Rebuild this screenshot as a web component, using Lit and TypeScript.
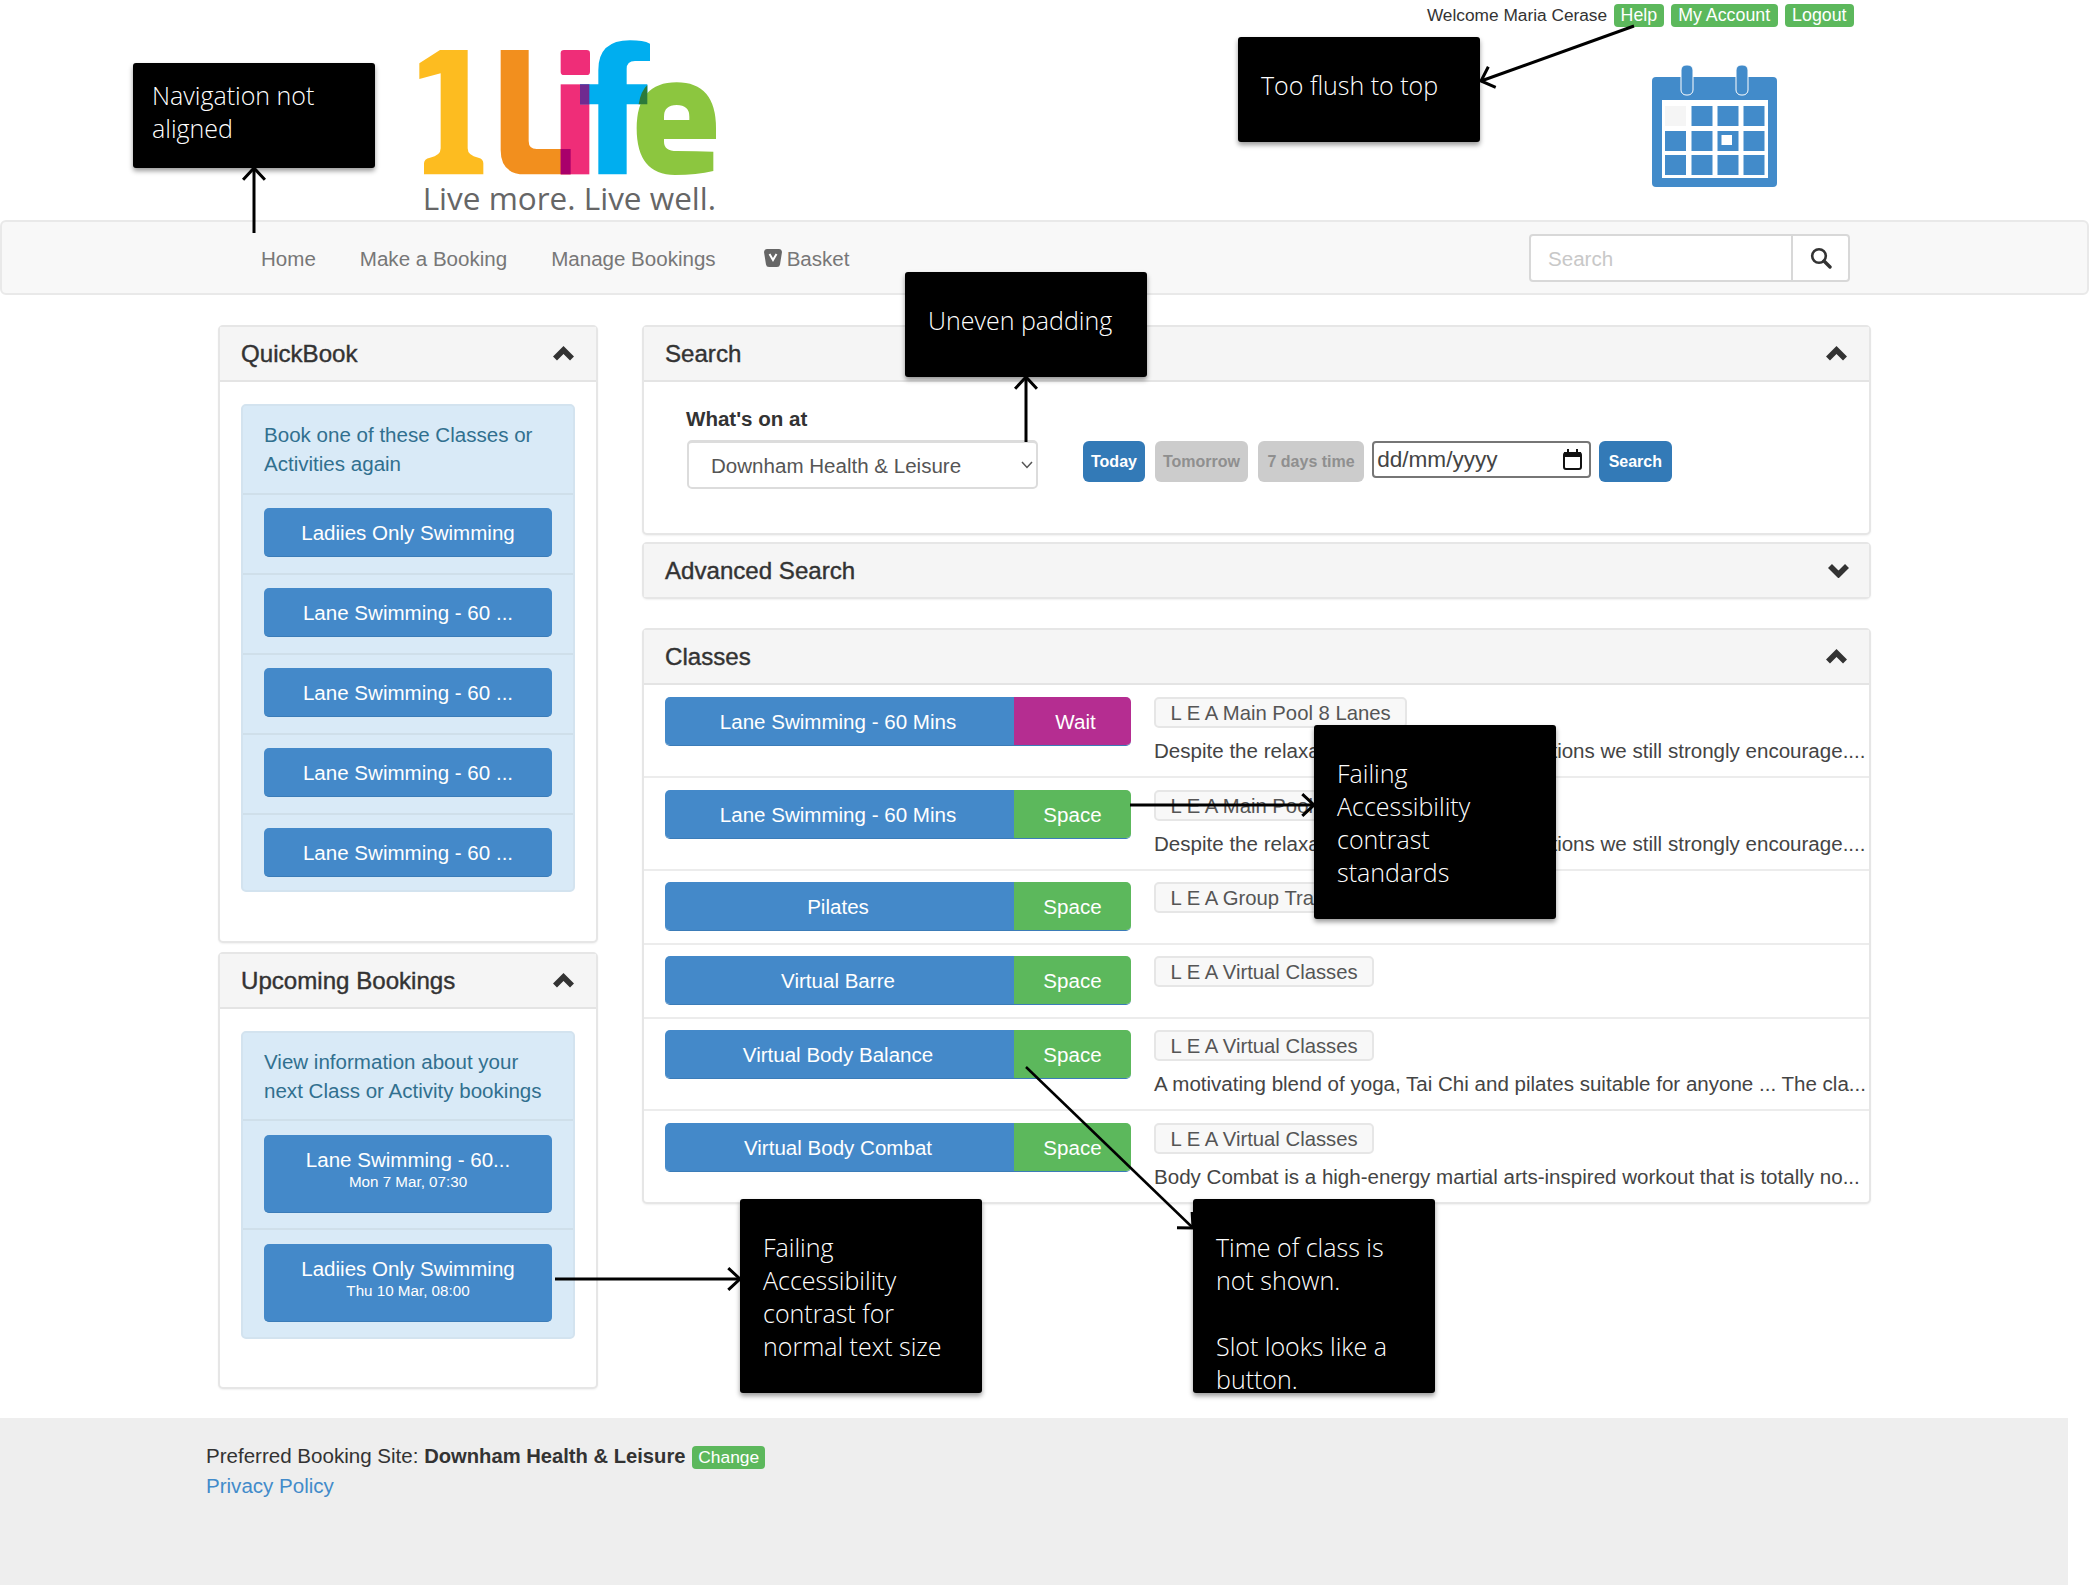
import { LitElement, html, css, svg } from "lit";
import { customElement } from "lit/decorators.js";

const DESC_COVID = "Despite the relaxation of all Covid-19 restrictions we still strongly encourage....";

const CLASSES = [
  { name: "Lane Swimming - 60 Mins", slot: "Wait", tag: "L E A Main Pool 8 Lanes", desc: DESC_COVID },
  { name: "Lane Swimming - 60 Mins", slot: "Space", tag: "L E A Main Pool 8 Lanes", desc: DESC_COVID },
  { name: "Pilates", slot: "Space", tag: "L E A Group Training", desc: "" },
  { name: "Virtual Barre", slot: "Space", tag: "L E A Virtual Classes", desc: "" },
  {
    name: "Virtual Body Balance",
    slot: "Space",
    tag: "L E A Virtual Classes",
    desc: "A motivating blend of yoga, Tai Chi and pilates suitable for anyone ... The cla...",
  },
  {
    name: "Virtual Body Combat",
    slot: "Space",
    tag: "L E A Virtual Classes",
    desc: "Body Combat is a high-energy martial arts-inspired workout that is totally no...",
  },
];

const QUICK = [
  "Ladiies Only Swimming",
  "Lane Swimming - 60 ...",
  "Lane Swimming - 60 ...",
  "Lane Swimming - 60 ...",
  "Lane Swimming - 60 ...",
];

const UPCOMING = [
  { name: "Lane Swimming - 60...", when: "Mon 7 Mar, 07:30" },
  { name: "Ladiies Only Swimming", when: "Thu 10 Mar, 08:00" },
];

// annotation arrows: line from (x1,y1) to the tip (x2,y2), open head
const ARROWS = [
  { x1: 254, y1: 233, x2: 254, y2: 168, w: 3 },
  { x1: 1634, y1: 26, x2: 1481, y2: 81, w: 3 },
  { x1: 1026, y1: 442, x2: 1026, y2: 377, w: 3 },
  { x1: 1130, y1: 805, x2: 1314, y2: 805, w: 3 },
  { x1: 555, y1: 1279, x2: 740, y2: 1279, w: 3 },
  { x1: 1026, y1: 1067, x2: 1193, y2: 1228, w: 2.5 },
];

function arrowHead(a: { x1: number; y1: number; x2: number; y2: number }) {
  const ang = Math.atan2(a.y1 - a.y2, a.x1 - a.x2);
  const len = 16;
  const spread = 0.75;
  const p = (d: number) => `${a.x2 + Math.cos(ang + d) * len},${a.y2 + Math.sin(ang + d) * len}`;
  return `M${p(spread)} L${a.x2},${a.y2} L${p(-spread)}`;
}

function chevron(up: boolean) {
  const d = up ? "M2 12.5 L10.5 4 L19 12.5" : "M2 3 L10.5 11.5 L19 3";
  return html`<svg class="chev ${up ? "" : "down"}" width="21" height="15" viewBox="0 0 21 15">
    <path d=${d} fill="none" stroke="#333" stroke-width="5.6" />
  </svg>`;
}

@customElement("app-root")
export class AppRoot extends LitElement {
  static styles = css`
    :host {
      display: block;
      position: relative;
      width: 2089px;
      font-family: "Liberation Sans", Arial, sans-serif;
      font-size: 20.55px;
      line-height: 29px;
      color: #333;
      background: #fff;
    }
    * {
      box-sizing: border-box;
    }

    /* header */
    .header {
      height: 220px;
      display: flex;
      justify-content: space-between;
    }
    .logo {
      margin: 35px 0 0 410px;
      display: block;
    }
    .header-right {
      display: flex;
      flex-direction: column;
      align-items: flex-end;
      padding: 4px 235px 0 0;
    }
    .toplinks {
      display: flex;
      align-items: center;
      font-size: 17.3px;
      line-height: 23px;
      gap: 7px;
    }
    .badge {
      background: #5cb85c;
      color: #fff;
      border-radius: 4px;
      padding: 0 7.5px;
      font-size: 17.8px;
      height: 23px;
      line-height: 23px;
    }
    .badge.help {
      padding: 0 6.5px;
    }
    .calendar {
      display: block;
      margin: 38px 77px 0 0;
    }

    /* navbar */
    .nav {
      height: 75px;
      border: 2px solid #e9e9e9;
      border-radius: 6px;
      background: #f8f8f8;
      display: flex;
      align-items: center;
      padding: 1px 237px 0 259px;
      gap: 44px;
      color: #777;
    }
    .nav .basket {
      display: flex;
      align-items: center;
      gap: 5px;
      margin-left: 4px;
    }
    .navsearch {
      margin-left: auto;
      display: flex;
      height: 48px;
      background: #fff;
      border: 2px solid #d8d8d8;
      border-radius: 4px;
    }
    .navsearch .field {
      width: 262px;
      padding-left: 17px;
      color: #c8c8c8;
      line-height: 45px;
      border-right: 2px solid #d8d8d8;
    }
    .navsearch .go {
      width: 55px;
      display: flex;
      align-items: center;
      justify-content: center;
    }

    /* page columns */
    .main {
      display: grid;
      grid-template-columns: 380px 1229px;
      column-gap: 44px;
      align-items: start;
      padding: 30px 0 0 218px;
    }
    .col {
      display: flex;
      flex-direction: column;
    }
    .col-left {
      gap: 9px;
    }
    .panel {
      background: #fff;
      border: 2px solid #e6e6e6;
      border-radius: 5px;
      box-shadow: 0 1px 2px rgba(0, 0, 0, 0.06);
    }
    .panel-head {
      height: 55px;
      background: #f5f5f5;
      border-bottom: 2px solid #e4e4e4;
      display: flex;
      align-items: center;
      justify-content: space-between;
      padding: 0 22px 0 21px;
      font-size: 24.1px;
      -webkit-text-stroke: 0.4px #333;
    }
    .panel-head.closed {
      height: 53px;
      border-bottom: none;
    }
    .panel-head .chev.down {
      margin-right: -2px;
    }

    /* left lists */
    .side-body {
      padding: 22px 21px 49px 21px;
    }
    .side-body.upcoming {
      padding-bottom: 48px;
    }
    .list {
      background: #d9eaf7;
      border: 2px solid #d3e3ef;
      border-radius: 5px;
    }
    .list-item {
      padding: 13px 21px 16px;
      border-top: 2px solid #cfdfea;
    }
    .list-item:last-child {
      padding-bottom: 13px;
    }
    .list-item:first-child {
      border-top: none;
      padding: 14px 21px 14px;
      color: #31708f;
      line-height: 29.3px;
    }
    .upcoming .list-item:not(:first-child) {
      padding: 14px 21px 15px;
    }
    .book {
      background: #4489c9;
      color: #fff;
      border-radius: 5px;
      text-align: center;
      height: 49px;
      line-height: 49px;
      border-bottom: 1px solid #3b7cb8;
    }
    .book.tall {
      height: 78px;
      line-height: 29px;
      padding-top: 10px;
    }
    .book small {
      display: block;
      font-size: 15.2px;
      line-height: 22px;
      margin-top: -3px;
    }

    /* search panel */
    .col-right .gap-small {
      margin-top: 7px;
    }
    .col-right .gap-big {
      margin-top: 29px;
    }
    .search-body {
      padding: 22px 43px 44px;
    }
    .search-body label {
      display: block;
      font-weight: bold;
      margin: 0 0 7px -1px;
      line-height: 29px;
    }
    .search-row {
      display: flex;
      align-items: flex-start;
    }
    .select {
      width: 351px;
      height: 49px;
      border: 2px solid #dcdcdc;
      border-top-width: 3px;
      border-radius: 5px;
      display: flex;
      align-items: center;
      justify-content: space-between;
      padding: 0 3px 0 22px;
      color: #555;
      margin-right: 45px;
    }
    .pill {
      height: 41px;
      line-height: 41px;
      margin: 1px 10px 0 0;
      padding: 0 8px;
      border-radius: 6px;
      font-size: 16px;
      font-weight: bold;
      white-space: nowrap;
    }
    .pill.blue {
      background: #337ab7;
      color: #fff;
    }
    .pill.go {
      padding: 0 9.5px;
    }
    .pill.grey {
      background: #ccc;
      color: #8f8f8f;
    }
    .pill.seven {
      margin-right: 8px;
      padding: 0 9.5px;
    }
    .date {
      width: 219px;
      height: 37px;
      margin: 1px 8px 0 0;
      border: 2px solid #767676;
      border-radius: 4px;
      display: flex;
      align-items: center;
      justify-content: space-between;
      padding: 0 7px 1px 3px;
      font-size: 22.6px;
      color: #444;
    }

    /* classes */
    .row {
      display: flex;
      gap: 23px;
      padding: 11.5px 0 0 21px;
      border-top: 2px solid #ececec;
      height: 74px;
    }
    .row.has-desc {
      height: 92.5px;
    }
    .row.first {
      border-top: none;
      height: 91px;
      padding-top: 12px;
    }
    .slot {
      flex: none;
      width: 466px;
      height: 49px;
      display: flex;
      color: #fff;
      border-radius: 5px;
      overflow: hidden;
      text-align: center;
      line-height: 49px;
      border-bottom: 1px solid #3b7cb8;
    }
    .slot .name {
      width: 349px;
      background: #4489c9;
      padding-right: 3px;
    }
    .slot .state {
      width: 117px;
    }
    .state.space {
      background: #5cb85c;
    }
    .state.wait {
      background: #b52d91;
      padding-left: 6px;
    }
    .info {
      min-width: 0;
      flex: 1;
    }
    .tag {
      display: inline-block;
      height: 31px;
      line-height: 28px;
      padding: 0 14.5px;
      background: #f8f8f8;
      border: 2px solid #e6e6e6;
      border-radius: 5px;
      white-space: nowrap;
      color: #555;
      font-size: 20.3px;
    }
    .desc {
      margin-top: 8px;
      white-space: nowrap;
      color: #444;
    }

    /* footer */
    .footer {
      width: 2068px;
      height: 167px;
      margin-top: 29px;
      background: #eee;
      padding: 23px 0 0 206px;
    }
    .footer b {
      color: #333;
      font-size: 20.2px;
    }
    .footer .badge {
      font-size: 17.4px;
      padding: 0 6px;
      margin-left: 1px;
      display: inline-block;
    }
    .footer a {
      color: #428bca;
      display: block;
      text-decoration: none;
    }

    /* review annotations that lie over the page */
    .marks {
      position: absolute;
      left: 0;
      top: 0;
      pointer-events: none;
    }
    .note {
      position: absolute;
      width: 242px;
      background: #000;
      color: #fff;
      border-radius: 3px;
      box-shadow: 0 3px 5px rgba(0, 0, 0, 0.4);
      font-family: "Open Sans", sans-serif;
      font-weight: 300;
      font-size: 25px;
      line-height: 33px;
      padding: 32px 23px 0;
      height: 105px;
    }
    .note.nav-note {
      left: 133px;
      top: 63px;
      padding: 16px 19px 0;
    }
    .note.flush {
      left: 1238px;
      top: 37px;
    }
    .note.uneven {
      left: 905px;
      top: 272px;
    }
    .note.tall {
      height: 194px;
    }
    .note.contrast {
      left: 1314px;
      top: 725px;
    }
    .note.normal {
      left: 740px;
      top: 1199px;
    }
    .note.time {
      left: 1193px;
      top: 1199px;
    }
  `;

  private renderLogo() {
    return html`<svg class="logo" width="320" height="185" viewBox="0 0 960 555">
      <path fill="#fdbc20" d="M28 85 L90 45 H173 V340 Q173 362 205 368 Q220 372 220 385 V418 H42 V385 Q42 372 60 368 Q92 362 92 340 V115 L28 132 Z" />
      <path fill="#f28f1e" d="M272 45 H356 V318 Q356 342 380 342 H482 V418 H345 Q272 418 272 345 Z" />
      <rect fill="#ef2d78" x="452" y="45" width="88" height="75" rx="10" />
      <rect fill="#ef2d78" x="452" y="148" width="86" height="270" />
      <rect fill="#a9006b" x="452" y="342" width="30" height="76" />
      <path fill="#00aeef" d="M510 148 H565 V105 Q565 16 660 16 Q700 16 720 26 V78 H675 Q650 78 650 102 V148 H712 V208 H650 V418 H565 V208 H510 Z" />
      <rect fill="#6f2a90" x="510" y="148" width="28" height="60" />
      <path fill="#8cc63f" fill-rule="evenodd" d="M680 280 Q680 142 800 142 Q918 142 918 280 V312 H762 V320 Q762 348 800 348 Q860 348 910 350 V408 Q860 420 795 420 Q680 420 680 280 Z M762 255 H838 V245 Q838 210 800 210 Q762 210 762 245 Z" />
      <path fill="#2c7a3a" d="M686 208 H712 V150 Q692 168 686 208 Z" />
      <text x="38" y="525" font-family="Open Sans, sans-serif" font-size="92" fill="#666" textLength="880" lengthAdjust="spacingAndGlyphs">Live more. Live well.</text>
    </svg>`;
  }

  private renderCalendar() {
    const cols = [13, 39.5, 65.5, 91.5];
    const rows = [41, 66, 90];
    return html`<svg class="calendar" width="125" height="122" viewBox="0 0 125 122">
      <rect x="0" y="12" width="125" height="110" rx="4" fill="#428bca" />
      <rect x="29" y="0" width="12" height="30" rx="5" fill="#428bca" stroke="#fff" stroke-width="1" />
      <rect x="84" y="0" width="12" height="30" rx="5" fill="#428bca" stroke="#fff" stroke-width="1" />
      <rect x="10" y="35" width="106" height="78" fill="#fff" />
      ${rows.map((y, r) =>
        cols.map(
          (x, c) =>
            svg`<rect x=${x} y=${y} width="21" height="20" fill=${r === 0 && c === 0 ? "#f5f5f5" : "#428bca"} />`,
        ),
      )}
      <rect x="69.5" y="70" width="10.5" height="10" fill="#fff" />
    </svg>`;
  }

  private renderHeader() {
    return html`<div class="header">
      ${this.renderLogo()}
      <div class="header-right">
        <div class="toplinks">
          <span>Welcome Maria Cerase</span>
          <span class="badge help">Help</span>
          <span class="badge">My Account</span>
          <span class="badge">Logout</span>
        </div>
        ${this.renderCalendar()}
      </div>
    </div>`;
  }

  private renderNav() {
    return html`<div class="nav">
      <span>Home</span>
      <span>Make a Booking</span>
      <span>Manage Bookings</span>
      <span class="basket">
        <svg width="18" height="18" viewBox="0 0 18 18">
          <path fill="#666" d="M3 0 H15 Q17.5 0 18 3 L16 15.5 Q15.6 18 13 18 H5 Q2.4 18 2 15.5 L0 3 Q0.5 0 3 0 Z" />
          <path fill="none" stroke="#fff" stroke-width="2" d="M5.5 5 L9 11 L12.5 5" />
        </svg>
        Basket
      </span>
      <div class="navsearch">
        <div class="field">Search</div>
        <div class="go">
          <svg width="22" height="22" viewBox="0 0 22 22">
            <circle cx="9" cy="9" r="6.8" fill="none" stroke="#333" stroke-width="2.6" />
            <path d="M14 14 L20 20" stroke="#333" stroke-width="3.4" stroke-linecap="round" />
          </svg>
        </div>
      </div>
    </div>`;
  }

  private renderLeft() {
    return html`<div class="col col-left">
      <div class="panel">
        <div class="panel-head">QuickBook ${chevron(true)}</div>
        <div class="side-body">
          <div class="list">
            <div class="list-item">Book one of these Classes or Activities again</div>
            ${QUICK.map((q) => html`<div class="list-item"><div class="book">${q}</div></div>`)}
          </div>
        </div>
      </div>
      <div class="panel">
        <div class="panel-head">Upcoming Bookings ${chevron(true)}</div>
        <div class="side-body upcoming">
          <div class="list">
            <div class="list-item">View information about your next Class or Activity bookings</div>
            ${UPCOMING.map(
              (u) => html`<div class="list-item">
                <div class="book tall">${u.name}<small>${u.when}</small></div>
              </div>`,
            )}
          </div>
        </div>
      </div>
    </div>`;
  }

  private renderSearch() {
    return html`<div class="panel">
      <div class="panel-head">Search ${chevron(true)}</div>
      <div class="search-body">
        <label>What's on at</label>
        <div class="search-row">
          <div class="select">
            Downham Health &amp; Leisure
            <svg width="12" height="8" viewBox="0 0 12 8">
              <path d="M1 1 L6 6.5 L11 1" fill="none" stroke="#555" stroke-width="1.5" />
            </svg>
          </div>
          <div class="pill blue">Today</div>
          <div class="pill grey">Tomorrow</div>
          <div class="pill grey seven">7 days time</div>
          <div class="date">
            dd/mm/yyyy
            <svg width="19" height="21" viewBox="0 0 19 21">
              <rect x="1" y="4" width="17" height="16" rx="2" fill="#fff" stroke="#111" stroke-width="2" />
              <rect x="1" y="3" width="17" height="5" fill="#111" />
              <rect x="4" y="0" width="2" height="4" fill="#111" />
              <rect x="13" y="0" width="2" height="4" fill="#111" />
            </svg>
          </div>
          <div class="pill blue go">Search</div>
        </div>
      </div>
    </div>`;
  }

  private renderClasses() {
    return html`<div class="panel gap-big">
      <div class="panel-head">Classes ${chevron(true)}</div>
      ${CLASSES.map(
        (c, i) => html`<div class="row ${c.desc ? "has-desc" : ""} ${i === 0 ? "first" : ""}">
          <div class="slot">
            <div class="name">${c.name}</div>
            <div class="state ${c.slot === "Wait" ? "wait" : "space"}">${c.slot}</div>
          </div>
          <div class="info">
            <div class="tag">${c.tag}</div>
            ${c.desc ? html`<div class="desc">${c.desc}</div>` : ""}
          </div>
        </div>`,
      )}
    </div>`;
  }

  private renderMarks() {
    return html`<svg class="marks" width="2089" height="1587" viewBox="0 0 2089 1587">
        ${ARROWS.map(
          (a) => svg`<line x1=${a.x1} y1=${a.y1} x2=${a.x2} y2=${a.y2} stroke="#000" stroke-width=${a.w} />
            <path d=${arrowHead(a)} fill="none" stroke="#000" stroke-width="3" />`,
        )}
      </svg>
      <div class="note nav-note">Navigation not aligned</div>
      <div class="note flush">Too flush to top</div>
      <div class="note uneven">Uneven padding</div>
      <div class="note tall contrast">Failing Accessibility contrast standards</div>
      <div class="note tall normal">Failing Accessibility contrast for normal text size</div>
      <div class="note tall time">Time of class is not shown.<br /><br />Slot looks like a button.</div>`;
  }

  render() {
    return html`
      ${this.renderHeader()} ${this.renderNav()}
      <div class="main">
        ${this.renderLeft()}
        <div class="col col-right">
          ${this.renderSearch()}
          <div class="panel gap-small">
            <div class="panel-head closed">Advanced Search ${chevron(false)}</div>
          </div>
          ${this.renderClasses()}
        </div>
      </div>
      <div class="footer">
        Preferred Booking Site: <b>Downham Health &amp; Leisure</b> <span class="badge">Change</span>
        <a>Privacy Policy</a>
      </div>
      ${this.renderMarks()}
    `;
  }
}
